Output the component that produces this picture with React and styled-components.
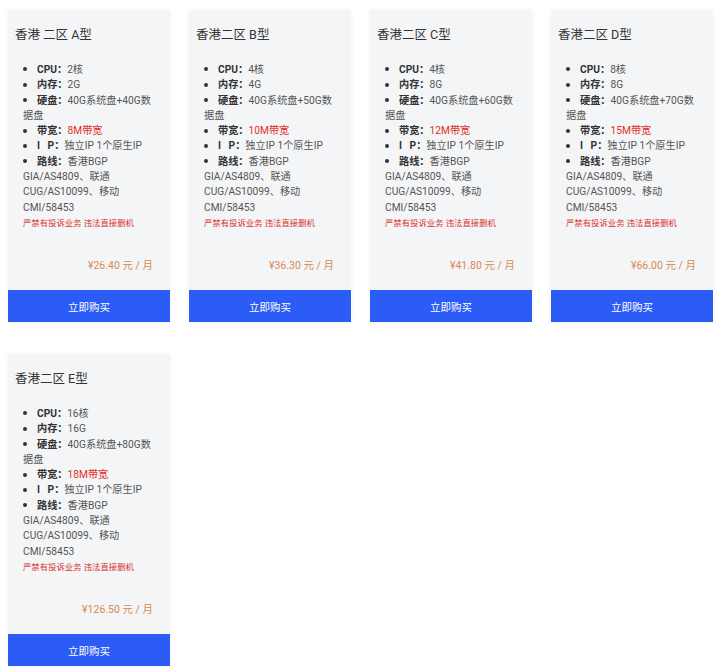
import React from 'react';
import styled, { createGlobalStyle } from 'styled-components';

const GlobalStyle = createGlobalStyle`
  html, body {
    margin: 0;
    padding: 0;
    background: #ffffff;
  }
  body {
    font-family: Roboto, 'Noto Sans CJK SC', sans-serif;
  }
`;

const Grid = styled.div`
  display: grid;
  grid-template-columns: repeat(4, 162px);
  column-gap: 19px;
  row-gap: 32px;
  padding: 10px 8px;
`;

const Card = styled.div`
  display: flex;
  flex-direction: column;
  height: 312px;
  background: #f4f5f7;
  box-shadow: 0 0 6px rgba(0, 0, 0, 0.05);
`;

const Body = styled.div`
  flex: 1;
  display: flex;
  flex-direction: column;
  padding: 0 14px 0 7px;
`;

const Title = styled.div`
  margin-top: 15px;
  font-size: 12.5px;
  line-height: 20px;
  color: #333333;
`;

const List = styled.ul`
  margin: 17px 0 0;
  padding: 0 0 0 8px;
  list-style: none;
`;

const Item = styled.li`
  font-size: 10.2px;
  line-height: 15.3px;
  color: #555555;
  &::before {
    content: '';
    display: inline-block;
    width: 4px;
    height: 4px;
    margin: 0 10px 2px 0;
    border-radius: 50%;
    background: #333333;
    vertical-align: middle;
  }
`;

const Label = styled.b`
  font-weight: 700;
  color: #333333;
`;

const Hot = styled.span`
  color: ${(p) => (p.$red ? '#e0302a' : 'inherit')};
`;

const Warning = styled.div`
  padding-left: 8px;
  font-size: 8.4px;
  line-height: 16px;
  color: #d9302c;
`;

const Price = styled.div`
  margin-top: auto;
  margin-bottom: 16px;
  padding-right: 3px;
  text-align: right;
  font-size: 10.5px;
  line-height: 16px;
  color: #d98a4e;
`;

const BuyButton = styled.button`
  height: 32px;
  width: 100%;
  border: none;
  background: #2c5cf6;
  color: #ffffff;
  font-family: Roboto, 'Noto Sans CJK SC', sans-serif;
  font-size: 10.5px;
  cursor: pointer;
`;

const plans = [
  { name: '香港 二区 A型', cpu: '2核', ram: '2G', disk: '40G', bw: '8M', price: '26.40' },
  { name: '香港二区 B型', cpu: '4核', ram: '4G', disk: '50G', bw: '10M', price: '36.30' },
  { name: '香港二区 C型', cpu: '4核', ram: '8G', disk: '60G', bw: '12M', price: '41.80' },
  { name: '香港二区 D型', cpu: '8核', ram: '8G', disk: '70G', bw: '15M', price: '66.00' },
  { name: '香港二区 E型', cpu: '16核', ram: '16G', disk: '80G', bw: '18M', price: '126.50' },
];

function Plan({ name, cpu, ram, disk, bw, price }) {
  return (
    <Card>
      <Body>
        <Title>{name}</Title>
        <List>
          <Item>
            <Label>CPU：</Label>
            {cpu}
          </Item>
          <Item>
            <Label>内存：</Label>
            {ram}
          </Item>
          <Item>
            <Label>硬盘：</Label>
            {`40G系统盘+${disk}数据盘`}
          </Item>
          <Item>
            <Label>带宽：</Label>
            <Hot $red>{`${bw}带宽`}</Hot>
          </Item>
          <Item>
            <Label>I&nbsp;&nbsp;&nbsp;P：</Label>
            独立IP 1个原生IP
          </Item>
          <Item>
            <Label>路线：</Label>
            香港BGP GIA/AS4809、联通 CUG/AS10099、移动 CMI/58453
          </Item>
        </List>
        <Warning>严禁有投诉业务 违法直接删机</Warning>
        <Price>{`¥${price} 元 / 月`}</Price>
      </Body>
      <BuyButton>立即购买</BuyButton>
    </Card>
  );
}

export default function App() {
  return (
    <>
      <GlobalStyle />
      <Grid>
        {plans.map((p) => (
          <Plan key={p.name} {...p} />
        ))}
      </Grid>
    </>
  );
}
